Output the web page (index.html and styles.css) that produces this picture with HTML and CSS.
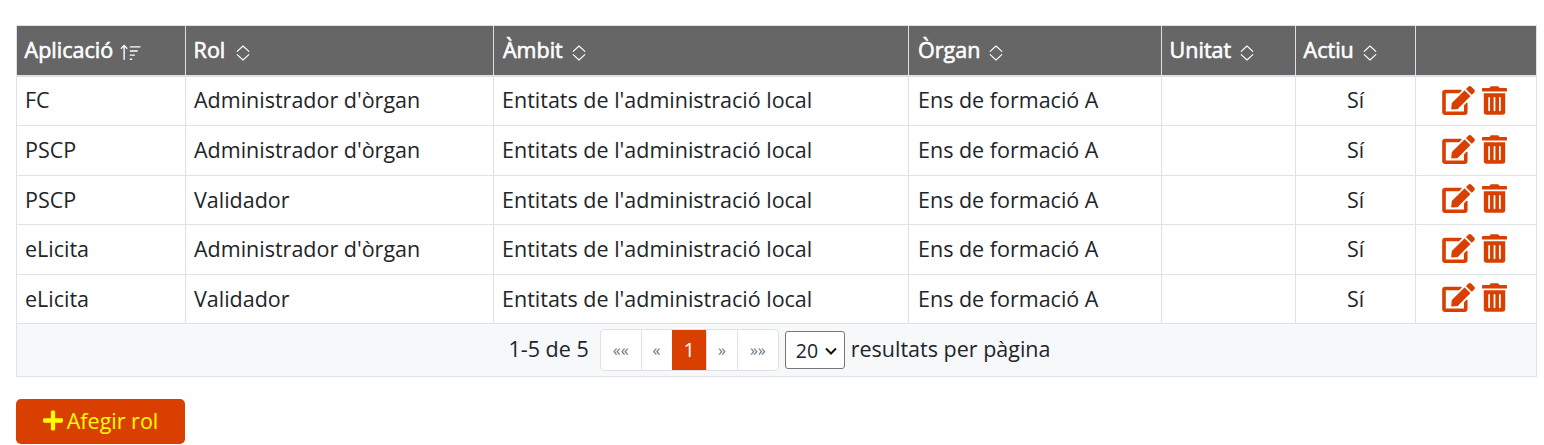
FILE: index.html
```html
<!DOCTYPE html>
<html lang="ca">
<head>
<meta charset="utf-8">
<title>Rols</title>
<link rel="stylesheet" href="styles.css">
</head>
<body>
<svg class="defs" width="0" height="0" aria-hidden="true">
  <symbol id="expand" viewBox="0 0 14 16"><path fill="none" stroke="currentColor" stroke-width="1.15" stroke-linecap="round" stroke-linejoin="round" d="M1.2 6.4 7 1 12.8 6.4M1.2 9.6 7 15 12.8 9.6"/></symbol>
  <symbol id="sortup" viewBox="0 0 16 16"><path fill="currentColor" d="M3.5 12.5a.5.5 0 0 1-1 0V3.707L1.354 4.854a.5.5 0 1 1-.708-.708l2-1.999.007-.007a.498.498 0 0 1 .7.006l2 2a.5.5 0 1 1-.707.708L3.5 3.707V12.5zm3.5-9a.5.5 0 0 1 .5-.5h7a.5.5 0 0 1 0 1h-7a.5.5 0 0 1-.5-.5zM7.5 6a.5.5 0 0 0 0 1h5a.5.5 0 0 0 0-1h-5zm0 3a.5.5 0 0 0 0 1h3a.5.5 0 0 0 0-1h-3zm0 3a.5.5 0 0 0 0 1h1a.5.5 0 0 0 0-1h-1z"/></symbol>
  <symbol id="edit" viewBox="0 0 576 512"><path fill="currentColor" d="M402.6 83.2l90.2 90.2c3.8 3.8 3.8 10 0 13.8L274.4 405.6l-92.8 10.3c-12.4 1.4-22.9-9.1-21.5-21.5l10.3-92.8L388.8 83.2c3.8-3.8 10-3.8 13.8 0zm162-22.9l-48.8-48.8c-15.2-15.2-39.9-15.2-55.2 0l-35.4 35.4c-3.8 3.8-3.8 10 0 13.8l90.2 90.2c3.8 3.8 10 3.8 13.8 0l35.4-35.4c15.2-15.3 15.2-40 0-55.2zM384 346.2V448H64V128h229.8c3.2 0 6.2-1.3 8.5-3.5l40-40c7.6-7.6 2.2-20.5-8.5-20.5H48C21.5 64 0 85.5 0 112v352c0 26.5 21.5 48 48 48h352c26.5 0 48-21.5 48-48V306.2c0-10.7-12.9-16-20.5-8.5l-40 40c-2.2 2.3-3.5 5.3-3.5 8.5z"/></symbol>
  <symbol id="trash" viewBox="0 0 448 512"><path fill="currentColor" d="M32 464a48 48 0 0 0 48 48h288a48 48 0 0 0 48-48V128H32zm272-256a16 16 0 0 1 32 0v224a16 16 0 0 1-32 0zm-96 0a16 16 0 0 1 32 0v224a16 16 0 0 1-32 0zm-96 0a16 16 0 0 1 32 0v224a16 16 0 0 1-32 0zM432 32H312l-9.4-18.7A24 24 0 0 0 281.1 0H166.8a23.72 23.72 0 0 0-21.4 13.3L136 32H16A16 16 0 0 0 0 48v32a16 16 0 0 0 16 16h416a16 16 0 0 0 16-16V48a16 16 0 0 0-16-16z"/></symbol>
  <symbol id="plus" viewBox="0 0 448 512"><path fill="currentColor" d="M416 208H272V64c0-17.67-14.33-32-32-32h-32c-17.67 0-32 14.33-32 32v144H32c-17.67 0-32 14.33-32 32v32c0 17.67 14.33 32 32 32h144v144c0 17.67 14.33 32 32 32h32c17.67 0 32-14.33 32-32V304h144c17.67 0 32-14.33 32-32v-32c0-17.67-14.33-32-32-32z"/></symbol>
</svg>
<main class="page">
  <table class="grid">
    <colgroup>
      <col class="c1"><col class="c2"><col class="c3"><col class="c4"><col class="c5"><col class="c6"><col class="c7">
    </colgroup>
    <thead>
      <tr>
        <th><span class="lbl">Aplicació</span><svg class="sortup"><use href="#sortup"/></svg></th>
        <th><span class="lbl">Rol</span><svg class="sort"><use href="#expand"/></svg></th>
        <th><span class="lbl">Àmbit</span><svg class="sort"><use href="#expand"/></svg></th>
        <th><span class="lbl">Òrgan</span><svg class="sort"><use href="#expand"/></svg></th>
        <th><span class="lbl">Unitat</span><svg class="sort"><use href="#expand"/></svg></th>
        <th><span class="lbl">Actiu</span><svg class="sort"><use href="#expand"/></svg></th>
        <th></th>
      </tr>
    </thead>
    <tbody>
      <tr><td>FC</td><td>Administrador d'òrgan</td><td>Entitats de l'administració local</td><td class="organ">Ens de formació A</td><td></td><td class="mid">Sí</td><td class="acts"><svg class="ic-edit"><use href="#edit"/></svg><svg class="ic-trash"><use href="#trash"/></svg></td></tr>
      <tr><td>PSCP</td><td>Administrador d'òrgan</td><td>Entitats de l'administració local</td><td class="organ">Ens de formació A</td><td></td><td class="mid">Sí</td><td class="acts"><svg class="ic-edit"><use href="#edit"/></svg><svg class="ic-trash"><use href="#trash"/></svg></td></tr>
      <tr><td>PSCP</td><td>Validador</td><td>Entitats de l'administració local</td><td class="organ">Ens de formació A</td><td></td><td class="mid">Sí</td><td class="acts"><svg class="ic-edit"><use href="#edit"/></svg><svg class="ic-trash"><use href="#trash"/></svg></td></tr>
      <tr><td>eLicita</td><td>Administrador d'òrgan</td><td>Entitats de l'administració local</td><td class="organ">Ens de formació A</td><td></td><td class="mid">Sí</td><td class="acts"><svg class="ic-edit"><use href="#edit"/></svg><svg class="ic-trash"><use href="#trash"/></svg></td></tr>
      <tr><td>eLicita</td><td>Validador</td><td>Entitats de l'administració local</td><td class="organ">Ens de formació A</td><td></td><td class="mid">Sí</td><td class="acts"><svg class="ic-edit"><use href="#edit"/></svg><svg class="ic-trash"><use href="#trash"/></svg></td></tr>
    </tbody>
    <tfoot>
      <tr>
        <td colspan="7">
          <div class="pager">
            <span class="pager-text">1-5 de 5</span>
            <ul class="pages">
              <li>««</li><li>«</li><li class="on">1</li><li>»</li><li>»»</li>
            </ul>
            <select class="size"><option>20</option></select>
            <span class="pager-text">resultats per pàgina</span>
          </div>
        </td>
      </tr>
    </tfoot>
  </table>
  <button class="add" type="button"><svg class="ic-plus"><use href="#plus"/></svg><span class="add-text">Afegir rol</span></button>
</main>
</body>
</html>
```
FILE: styles.css
```css
* { box-sizing: border-box; }
html, body { margin: 0; padding: 0; background: #fff; }
body {
  font-family: "Open Sans", "Noto Sans", sans-serif;
  font-size: 21.5px;
  line-height: 30px;
  color: #212529;
  overflow: hidden;
}
.defs { position: absolute; }
.page { padding: 25px 7px 0 16px; }
.grid {
  width: 1520px;
  table-layout: fixed;
  border-collapse: collapse;
  border: 1px solid #dee2e6;
}
.c1 { width: 169px; }
.c2 { width: 308px; }
.c3 { width: 415px; }
.c4 { width: 253px; }
.c5 { width: 134px; }
.c6 { width: 120px; }
.c7 { width: 121px; }

th {
  height: 50.5px;
  padding: 0 8px 2px;
  background: #666;
  color: #fff;
  font-weight: 400;
  text-align: left;
  white-space: nowrap;
  border: 1px solid #dee2e6;
  border-bottom-width: 2px;
}
.lbl { -webkit-text-stroke: 0.6px #fff; margin-left: -0.4px; }
th:nth-child(3) .lbl, th:nth-child(4) .lbl { margin-left: 1px; }
.sort { width: 14px; height: 16px; margin-left: 9px; vertical-align: -3px; }
th:nth-child(2) .sort { margin-left: 10.5px; }
.sortup { width: 22px; height: 22px; margin-left: 6.5px; vertical-align: -6px; }
td {
  height: 49.5px;
  padding: 0 8px;
  border: 1px solid #dee2e6;
  white-space: nowrap;
}
tbody tr:first-child td { padding-bottom: 2px; }
.organ { padding-left: 9px; }
.mid { text-align: center; }
.acts { text-align: center; color: #d94000; line-height: 0; padding-right: 11px; }
.acts svg { margin-bottom: 2px; }
tbody tr:first-child .acts svg { margin-bottom: 0; }
.ic-edit { width: 33px; height: 29px; vertical-align: middle; }
.ic-trash { width: 25px; height: 29px; margin-left: 7px; vertical-align: middle; }

tfoot td { height: 53px; background: #f7f8fa; }
.pager { display: flex; justify-content: center; align-items: center; gap: 6px; padding-left: 6px; }
.pager-text { padding-bottom: 2px; }
.pages {
  display: flex;
  list-style: none;
  margin: 0 0 0 5px;
  padding: 0;
  border: 1px solid #dee2e6;
  border-radius: 4px;
  background: #fff;
  font-size: 16px;
  color: #6c757d;
  height: 42px;
}
.pages li { display: flex; align-items: center; justify-content: center; padding: 0 11px; border-left: 1px solid #dee2e6; }
.pages li:first-child { border-left: 0; padding: 0 12px; }
.pages li:last-child { padding: 0 12px; }
.pages .on { background: #d94000; color: #fff; border-left: 0; font-size: 20px; padding: 0 11px 0 12px; }
.size {
  appearance: none;
  -webkit-appearance: none;
  font: 19.5px "Open Sans", sans-serif;
  width: 60px;
  height: 38px;
  color: #212529;
  border: 1px solid #767676;
  border-radius: 3px;
  padding: 0 0 0 10px;
  background: #fff url("data:image/svg+xml,%3Csvg xmlns='http://www.w3.org/2000/svg' width='12' height='8'%3E%3Cpath d='M1 1.5 6 6.5 11 1.5' fill='none' stroke='%23111' stroke-width='2'/%3E%3C/svg%3E") no-repeat 39px 15px;
}
.add {
  display: flex;
  align-items: center;
  margin-top: 22px;
  width: 169px;
  height: 45px;
  justify-content: center;
  gap: 4px;
  padding: 0 0 2px;
  background: #d94000;
  color: #ff0;
  border: 0;
  border-radius: 5px;
  font: 21.5px "Open Sans", sans-serif;
}
.ic-plus { width: 20px; height: 23px; }
```
